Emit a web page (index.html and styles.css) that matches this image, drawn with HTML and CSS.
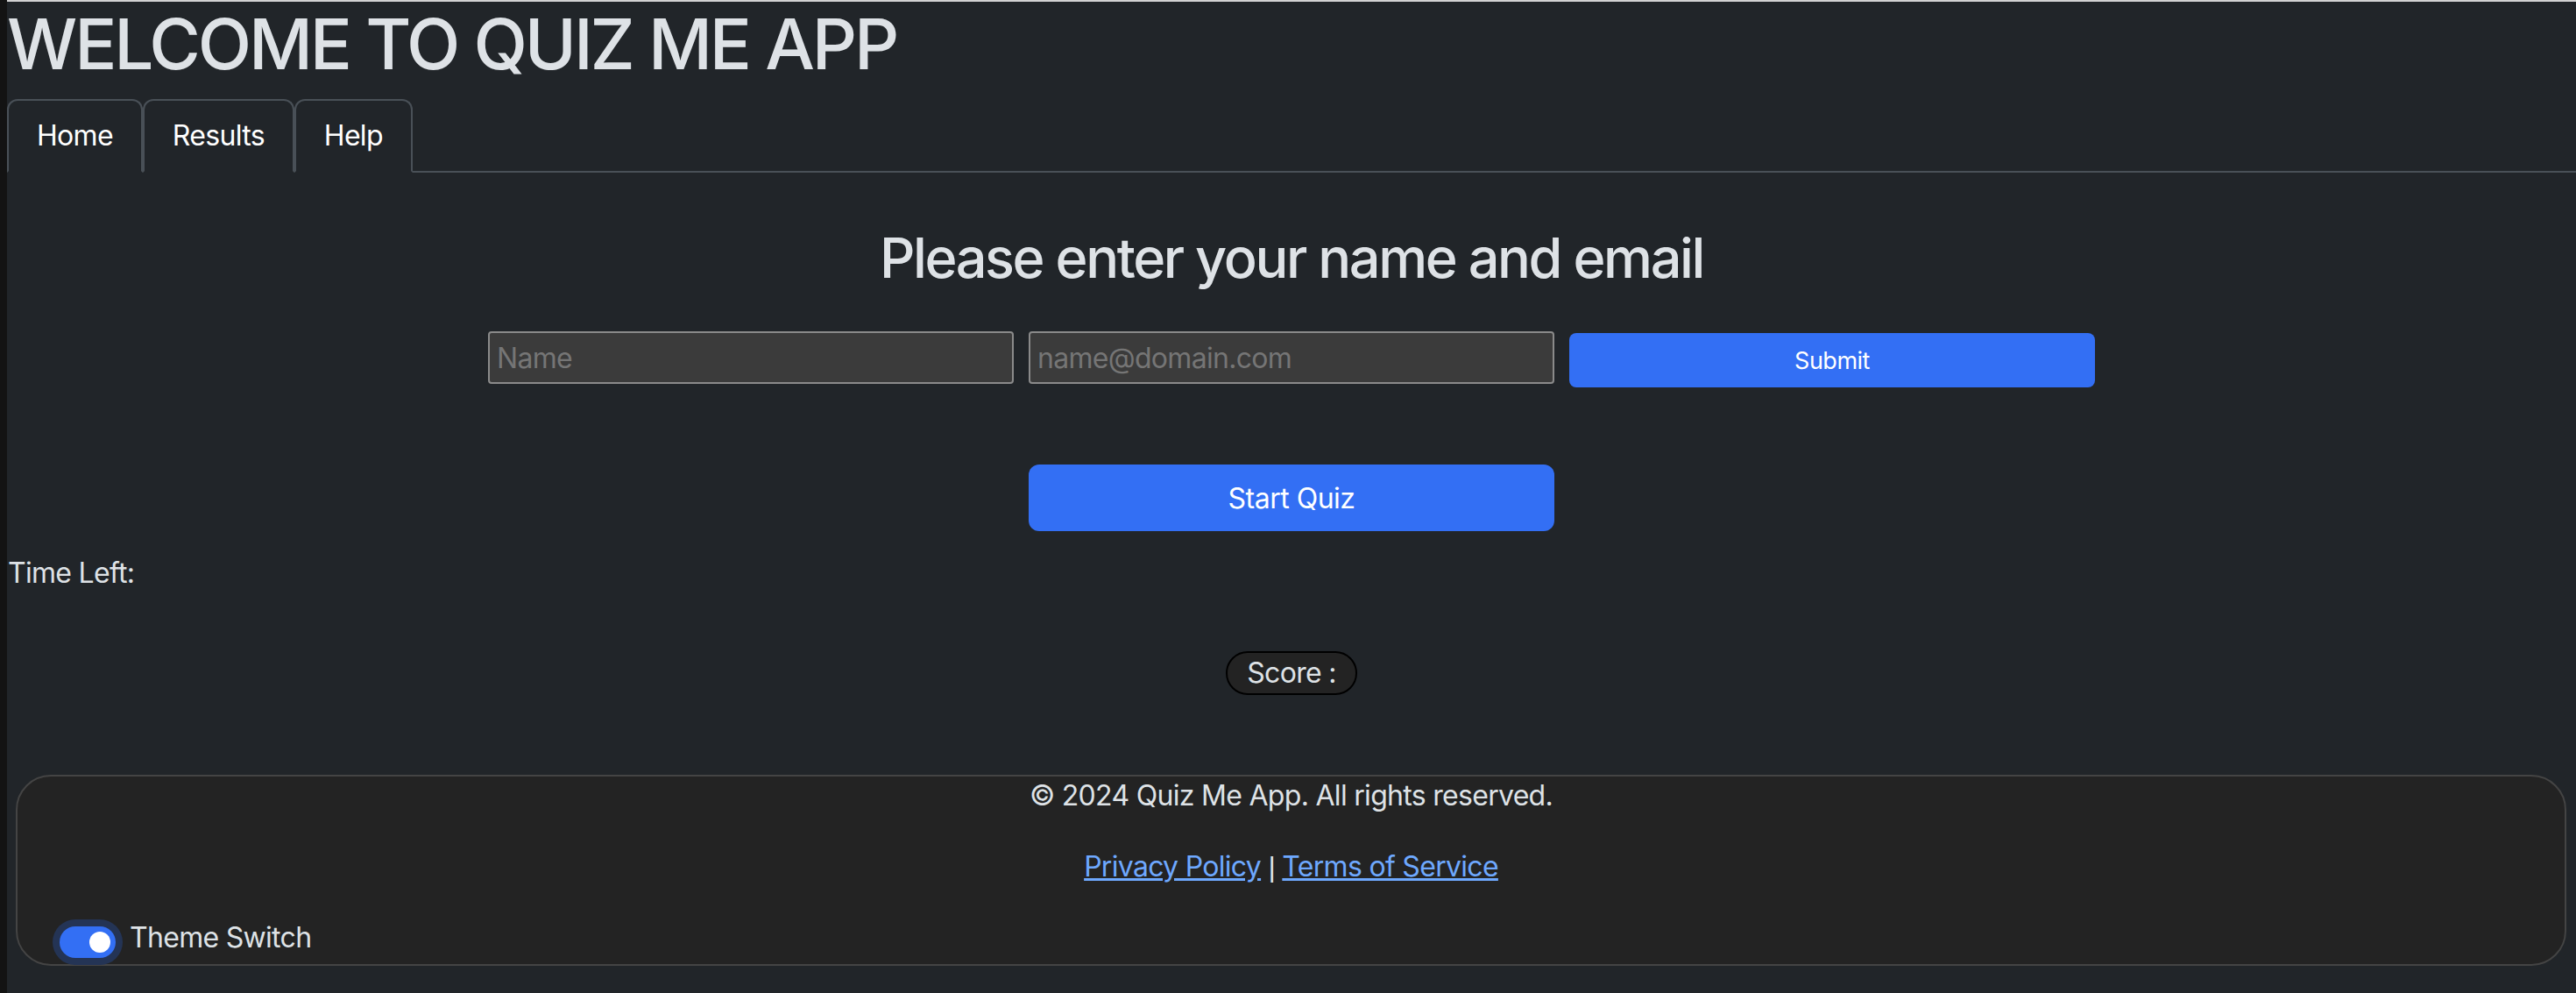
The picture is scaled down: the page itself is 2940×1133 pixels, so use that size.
FILE: index.html
```html
<!DOCTYPE html>
<html lang="en">
<head>
<meta charset="utf-8">
<title>Quiz Me App</title>
<link rel="stylesheet" href="styles.css">
</head>
<body>
<header class="site-header">
  <h1 class="app-title">WELCOME TO QUIZ ME APP</h1>
  <nav class="tabs">
    <a class="tab" href="#">Home</a>
    <a class="tab" href="#">Results</a>
    <a class="tab" href="#">Help</a>
  </nav>
</header>
<main class="main">
  <h2 class="prompt">Please enter your name and email</h2>
  <form class="user-form">
    <input class="field" type="text" placeholder="Name">
    <input class="field" type="email" placeholder="name@domain.com">
    <button class="btn btn-submit" type="button">Submit</button>
  </form>
  <button class="btn btn-start" type="button">Start Quiz</button>
  <div class="timer">Time Left:</div>
  <div class="score-row"><span class="score">Score :</span></div>
</main>
<footer class="footer">
  <p class="copy">© 2024 Quiz Me App. All rights reserved.</p>
  <p class="links"><a class="link" href="#">Privacy Policy</a> <span class="sep">|</span> <a class="link" href="#">Terms of Service</a></p>
  <label class="theme-switch"><span class="switch"><span class="knob"></span></span>Theme Switch</label>
</footer>
</body>
</html>
```

FILE: styles.css
```css
* { box-sizing: border-box; }

html {
  background: #131313;
  height: 100%;
}

body {
  margin: 0 0 0 8px;
  min-height: 100%;
  background: #212529;
  border-top: 2px solid #d2d2d2;
  color: #dee2e6;
  font-family: Inter, "Noto Sans", sans-serif;
  font-size: 32px;
  line-height: 48px;
  letter-spacing: -0.7px;
}

.app-title {
  margin: 0 0 15px 0;
  font-size: 80px;
  line-height: 96px;
  font-weight: 500;
  letter-spacing: -3.1px;
  color: #dee2e6;
}

.tabs {
  display: flex;
  border-bottom: 2px solid #495057;
}

.tab {
  display: block;
  margin-bottom: -2px;
  padding: 16px 32px;
  border: 2px solid #495057;
  border-bottom-color: #212529;
  border-radius: 12px 12px 0 0;
  background: #212529;
  color: #ffffff;
  text-decoration: none;
  line-height: 48px;
}

.main {
  display: flex;
  flex-direction: column;
}

.prompt {
  margin: 59px 0 0 0;
  text-align: center;
  font-size: 63px;
  line-height: 76px;
  font-weight: 500;
  letter-spacing: -2.4px;
  color: #dee2e6;
}

.user-form {
  display: flex;
  justify-content: center;
  align-items: flex-start;
  gap: 17px;
  margin: 46px 0 0 0;
}

.field {
  width: 600px;
  height: 60px;
  margin: 0;
  padding: 0 8px;
  background: #3b3b3b;
  border: 2px solid #8a8a8a;
  border-radius: 4px;
  color: #e0e0e0;
  font-family: Inter, "Noto Sans", sans-serif;
  font-size: 32px;
  letter-spacing: -0.7px;
}

.field::placeholder {
  color: #757575;
}

.btn {
  border: none;
  color: #ffffff;
  background: #336ff4;
  font-family: Inter, "Noto Sans", sans-serif;
  letter-spacing: -0.5px;
  cursor: pointer;
}

.btn-submit {
  width: 600px;
  height: 62px;
  margin-top: 2px;
  border-radius: 8px;
  font-size: 27px;
}

.btn-start {
  display: block;
  align-self: center;
  width: 600px;
  height: 76px;
  margin-top: 88px;
  border-radius: 12px;
  font-size: 32px;
}

.timer {
  margin-top: 24px;
  padding-left: 1px;
}

.score-row {
  display: flex;
  justify-content: center;
  margin-top: 65px;
}

.score {
  display: block;
  height: 50px;
  padding: 0 22px;
  border: 2px solid #000000;
  border-radius: 25px;
  background: #232323;
  line-height: 46px;
}

.footer {
  margin: 91px 11px 30px 10px;
  padding: 0 0 6px 0;
  border: 2px solid #444444;
  border-radius: 40px;
  background: #232323;
  text-align: center;
}

.footer p {
  margin: 0 0 33px 0;
}

.copy {
  margin-top: -2px !important;
}

.link {
  color: #6ea8fe;
  text-decoration: underline;
}

.sep {
  font-family: "Liberation Sans", sans-serif;
}

.theme-switch {
  display: flex;
  align-items: center;
  gap: 16px;
  padding-left: 48px;
  text-align: left;
}

.switch {
  position: relative;
  display: block;
  width: 64px;
  height: 36px;
  margin-top: 10px;
  border-radius: 18px;
  background: #336ff4;
  box-shadow: 0 0 0 8px #243455;
}

.knob {
  position: absolute;
  top: 6px;
  right: 6px;
  width: 24px;
  height: 24px;
  border-radius: 50%;
  background: #ffffff;
}
```
